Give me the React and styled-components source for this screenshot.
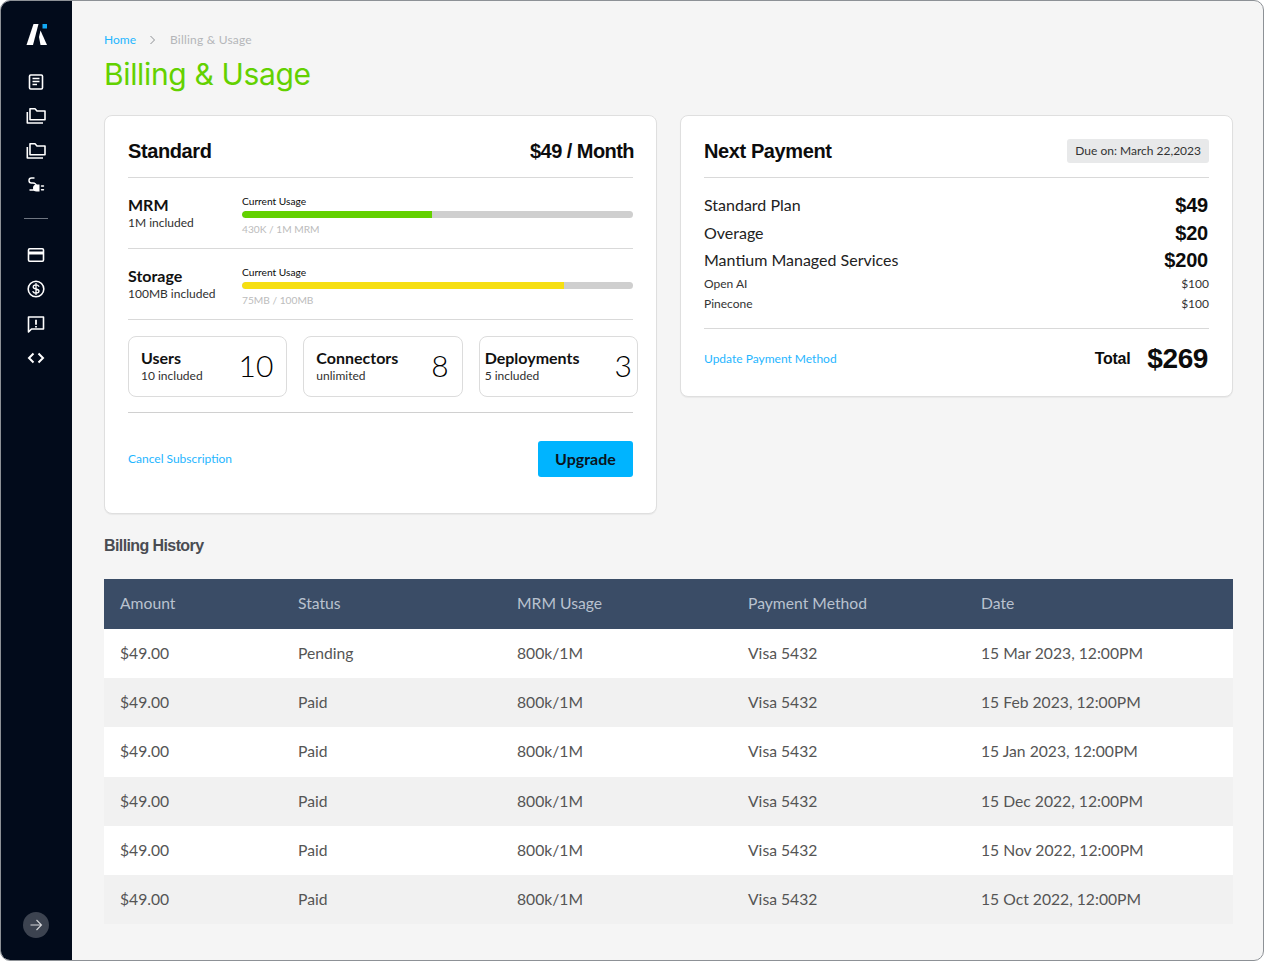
import React from 'react';
import styled, { createGlobalStyle } from 'styled-components';

const bodyFont = `Lato, 'Noto Sans', sans-serif`;
const headFont = `'Liberation Sans', Arial, sans-serif`;

const GlobalStyle = createGlobalStyle`
  html, body {
    margin: 0;
    padding: 0;
    background: #fff;
  }
  * {
    box-sizing: border-box;
  }
`;

const Frame = styled.div`
  display: flex;
  width: 1264px;
  height: 961px;
  overflow: hidden;
  border: 1px solid #8d9196;
  border-radius: 10px;
  background: #f5f5f5;
  font-family: ${bodyFont};
  color: #0c0c0c;
`;

const Sidebar = styled.nav`
  flex: 0 0 71px;
  display: flex;
  flex-direction: column;
  align-items: center;
  padding: 22px 1px 22px 0;
  background: #020b1b;
  color: #fff;
`;

const Logo = styled.svg`
  display: block;
  width: 23px;
  height: 24px;
  margin-bottom: 23px;
`;

const NavIcon = styled.a`
  display: flex;
  align-items: center;
  justify-content: center;
  width: 24px;
  height: 24px;
  margin-bottom: 10.3px;
  color: #fff;

  svg {
    display: block;
    width: 20px;
    height: 20px;
  }
`;

const NavRule = styled.hr`
  width: 24px;
  height: 1px;
  margin: 11px 0 24px;
  border: 0;
  background: #6f7681;
`;

const CollapseButton = styled.button`
  display: flex;
  align-items: center;
  justify-content: center;
  width: 26px;
  height: 26px;
  margin-top: auto;
  padding: 0;
  border: 0;
  border-radius: 50%;
  background: #3c4350;
  color: #d5d7da;

  svg {
    width: 14px;
    height: 14px;
  }
`;

const Main = styled.main`
  flex: 1;
  min-width: 0;
  padding: 31px 30px 0 32px;
`;

const Breadcrumb = styled.div`
  display: flex;
  align-items: center;
  height: 15px;
  font-size: 12px;
  color: #b4b6b9;

  a {
    color: #1fb6ff;
  }

  span {
    letter-spacing: 0.2px;
  }

  svg {
    width: 10px;
    height: 10px;
    margin: 0 12px 0 12px;
    color: #8c8f93;
  }
`;

const PageTitle = styled.h1`
  margin: 7px 0 21px;
  font-family: Inter, sans-serif;
  font-size: 30px;
  line-height: 40px;
  font-weight: 400;
  letter-spacing: -0.35px;
  color: #63d100;
`;

const CardRow = styled.div`
  display: grid;
  grid-template-columns: 553px 553px;
  column-gap: 23px;
  align-items: start;
`;

const Card = styled.section`
  height: ${p => p.$height}px;
  padding: 0 23px;
  background: #fff;
  border: 1px solid #dfdfdf;
  border-radius: 8px;
  box-shadow: 0 1px 1px rgba(0, 0, 0, 0.05);
`;

const CardHead = styled.header`
  display: flex;
  align-items: center;
  justify-content: space-between;
  height: 62px;
  padding-top: 8px;
  border-bottom: 1px solid #d9d9d9;
`;

const CardTitle = styled.h2`
  margin: 0;
  font-family: ${headFont};
  font-size: 20px;
  line-height: 24px;
  font-weight: 700;
  letter-spacing: -0.4px;
`;

const PlanPrice = styled(CardTitle)`
  letter-spacing: -0.55px;
  margin-right: -1px;
`;

const DueBadge = styled.span`
  padding: 0 8px;
  height: 24px;
  line-height: 24px;
  font-size: 12px;
  color: #333;
  background: #e8e9ea;
  border-radius: 3px;
`;

const MeterRow = styled.div`
  display: flex;
  height: 71px;
  padding-top: 18px;
  border-bottom: 1px solid #d9d9d9;
`;

const MeterName = styled.div`
  flex: 0 0 114px;
`;

const ItemTitle = styled.div`
  font-size: 16px;
  line-height: 17px;
  font-weight: 700;
  color: #111;
`;

const ItemNote = styled.div`
  font-size: 12px;
  line-height: 19px;
  color: #2f2f2f;
`;

const MeterBody = styled.div`
  flex: 1;
  margin-top: -2px;
  font-size: 10.2px;
  line-height: 14px;
`;

const Track = styled.div`
  height: 7px;
  margin: 3px 0 4px;
  overflow: hidden;
  border-radius: 4px;
  background: #cfcfcf;
`;

const Fill = styled.div`
  height: 100%;
  border-radius: 4px 0 0 4px;
  background: ${p => p.$color};
`;

const MeterCaption = styled.div`
  color: #bcbcbc;
`;

const StatRow = styled.div`
  display: grid;
  grid-template-columns: repeat(3, 1fr);
  gap: 16px;
  width: 510px;
  height: 92px;
  padding: 16px 0 15px;
`;

const StatDivider = styled.div`
  border-top: 1px solid #d0d0d0;
`;

const StatBox = styled.div`
  display: flex;
  align-items: center;
  justify-content: space-between;
  padding: 0 ${p => p.$right}px 0 ${p => p.$left}px;
  border: 1px solid #dcdcdc;
  border-radius: 8px;
`;

const StatNumber = styled.span`
  margin-bottom: 4px;
  font-size: 30px;
  font-weight: 300;
  color: #000;
`;

const ActionRow = styled.div`
  display: flex;
  align-items: center;
  justify-content: space-between;
  margin-top: 28px;
`;

const TextLink = styled.a`
  margin-top: -2px;
  font-size: 12px;
  color: #1fb6ff;
`;

const UpgradeButton = styled.button`
  width: 95px;
  height: 36px;
  padding: 0 0 2px;
  border: 0;
  border-radius: 3px;
  background: #00b4ff;
  font-family: ${bodyFont};
  font-size: 16px;
  font-weight: 700;
  color: #0a1420;
`;

const Charges = styled.div`
  padding: 13px 0 14px;
  border-bottom: 1px solid #d9d9d9;
`;

const ChargeLine = styled.div`
  display: flex;
  align-items: center;
  justify-content: space-between;
  height: 27.5px;
  font-size: 16px;
  color: #222;

  strong {
    margin: 2px 1px 0 0;
    font-family: ${headFont};
    font-size: 20px;
    letter-spacing: -0.2px;
    color: #0c0c0c;
  }
`;

const SubLine = styled.div`
  display: flex;
  justify-content: space-between;
  height: 20px;
  line-height: 20px;
  font-size: 12px;
  color: #333;
`;

const TotalRow = styled.div`
  display: flex;
  align-items: center;
  justify-content: space-between;
  height: 61px;
`;

const TotalGroup = styled.div`
  display: flex;
  align-items: center;
  gap: 17px;
  margin-right: 1px;
  font-family: ${headFont};
  font-weight: 700;
  font-size: 16px;
  letter-spacing: -0.3px;

  b {
    font-size: 28px;
    letter-spacing: -0.4px;
  }
`;

const SectionTitle = styled.h3`
  margin: 22px 0 23px;
  font-family: ${headFont};
  font-size: 16px;
  line-height: 20px;
  font-weight: 700;
  letter-spacing: -0.6px;
  color: #4a4c52;
`;

const HistoryTable = styled.table`
  width: 1129px;
  border-collapse: collapse;
  table-layout: fixed;
  font-size: 15.7px;

  th,
  td {
    padding: 0 0 0 16px;
    text-align: left;
    font-weight: 400;
  }

  th {
    height: 50px;
    padding-bottom: 2px;
    background: #3a4c66;
    color: #b9c2cf;
  }

  td {
    height: 49.2px;
    padding-bottom: 1px;
    color: #555;
  }

  tbody tr:nth-child(odd) {
    background: #fff;
  }

  tbody tr:nth-child(even) {
    background: #f1f1f1;
  }
`;

const stroke = { fill: 'none', stroke: 'currentColor', strokeWidth: 1.6 };

const IconNews = () => (
  <svg viewBox="0 0 20 20" {...stroke}>
    <rect x="3.500" y="3" width="13" height="14" rx="1.200" />
    <path d="M6.500 6.500h7M6.500 9.500h7M6.500 12.500h4.500" />
  </svg>
);

const IconFolders = () => (
  <svg viewBox="0 0 20 20" {...stroke} strokeLinejoin="round">
    <path d="M4 2.800v11h15V5h-8L9 2.800z" />
    <path d="M1.300 6v11H17" />
  </svg>
);

const IconPlug = () => (
  <svg viewBox="0 0 20 20" {...stroke} strokeWidth="1.400" strokeLinecap="round">
    <path d="M8 3H5.500a2.500 2.500 0 0 0 0 5H7a3 3 0 0 1 0 7H4" />
    <path d="M10.500 9.500h3v7h-3a3.500 3.500 0 0 1 0-7z" fill="currentColor" stroke="none" />
    <path d="M15.500 11h2M15.500 14.800h2" />
  </svg>
);

const IconCard = () => (
  <svg viewBox="0 0 20 20" {...stroke}>
    <rect x="2.500" y="3.800" width="15" height="12.400" rx="1.200" />
    <path d="M2.500 8h15" strokeWidth="3" />
  </svg>
);

const IconDollar = () => (
  <svg viewBox="0 0 20 20" {...stroke} strokeLinecap="round">
    <circle cx="10" cy="10" r="7.800" />
    <path d="M12.800 7.300c-.5-1-1.500-1.500-2.800-1.500-1.600 0-2.800.9-2.800 2.100 0 2.900 5.800 1.300 5.800 4.200 0 1.200-1.300 2.100-3 2.100-1.400 0-2.500-.6-3-1.600M10 4.500v11" strokeWidth="1.300" />
  </svg>
);

const IconReport = () => (
  <svg viewBox="0 0 20 20" {...stroke} strokeLinejoin="round">
    <path d="M2.500 18V3h15v12H5.500z" />
    <path d="M10 5.800v5M10 12v1.400" strokeWidth="1.800" />
  </svg>
);

const IconCode = () => (
  <svg viewBox="0 0 20 20" {...stroke} strokeWidth="2">
    <path d="M7.500 5.500 3 10l4.500 4.500M12.500 5.500 17 10l-4.500 4.500" />
  </svg>
);

const IconArrow = () => (
  <svg viewBox="0 0 14 14" fill="none" stroke="currentColor" strokeWidth="1.100">
    <path d="M1.500 7h11M7.500 2l5 5-5 5" />
  </svg>
);

const IconChevron = () => (
  <svg viewBox="0 0 10 10" fill="none" stroke="currentColor" strokeWidth="1">
    <path d="M2.500 1 6.500 5l-4 4" />
  </svg>
);

const navTop = [IconNews, IconFolders, IconFolders, IconPlug];
const navBottom = [IconCard, IconDollar, IconReport, IconCode];

const meters = [
  { name: 'MRM', note: '1M included', caption: '430K / 1M MRM', pct: 48.6, color: '#63d100' },
  { name: 'Storage', note: '100MB included', caption: '75MB / 100MB', pct: 82.4, color: '#f6df12' },
];

const stats = [
  { name: 'Users', note: '10 included', value: '10', left: 12, right: 13 },
  { name: 'Connectors', note: 'unlimited', value: '8', left: 12, right: 13 },
  { name: 'Deployments', note: '5 included', value: '3', left: 5, right: 5 },
];

const history = [
  ['Pending', '15 Mar 2023, 12:00PM'],
  ['Paid', '15 Feb 2023, 12:00PM'],
  ['Paid', '15 Jan 2023, 12:00PM'],
  ['Paid', '15 Dec 2022, 12:00PM'],
  ['Paid', '15 Nov 2022, 12:00PM'],
  ['Paid', '15 Oct 2022, 12:00PM'],
];

const columns = [
  ['Amount', 178],
  ['Status', 219],
  ['MRM Usage', 231],
  ['Payment Method', 233],
  ['Date', 268],
];

export default function App() {
  return (
    <Frame>
      <GlobalStyle />
      <Sidebar>
        <Logo viewBox="0 0 23 24">
          <path d="M1.500 22 8.500 1h5L8 22z" fill="#fff" />
          <path d="M15.500 7.500 22 22h-6.500l-1.500-8z" fill="#fff" />
          <rect x="17.500" y="1" width="4.500" height="4.500" fill="#12a9f5" />
        </Logo>
        {navTop.map((Icon, i) => (
          <NavIcon key={i}>
            <Icon />
          </NavIcon>
        ))}
        <NavRule />
        {navBottom.map((Icon, i) => (
          <NavIcon key={i}>
            <Icon />
          </NavIcon>
        ))}
        <CollapseButton>
          <IconArrow />
        </CollapseButton>
      </Sidebar>
      <Main>
        <Breadcrumb>
          <a>Home</a>
          <IconChevron />
          <span>Billing &amp; Usage</span>
        </Breadcrumb>
        <PageTitle>Billing &amp; Usage</PageTitle>
        <CardRow>
          <Card $height={399}>
            <CardHead>
              <CardTitle>Standard</CardTitle>
              <PlanPrice>$49 / Month</PlanPrice>
            </CardHead>
            {meters.map(m => (
              <MeterRow key={m.name}>
                <MeterName>
                  <ItemTitle>{m.name}</ItemTitle>
                  <ItemNote>{m.note}</ItemNote>
                </MeterName>
                <MeterBody>
                  Current Usage
                  <Track>
                    <Fill $color={m.color} style={{ width: `${m.pct}%` }} />
                  </Track>
                  <MeterCaption>{m.caption}</MeterCaption>
                </MeterBody>
              </MeterRow>
            ))}
            <StatRow>
              {stats.map(s => (
                <StatBox key={s.name} $left={s.left} $right={s.right}>
                  <div>
                    <ItemTitle>{s.name}</ItemTitle>
                    <ItemNote>{s.note}</ItemNote>
                  </div>
                  <StatNumber>{s.value}</StatNumber>
                </StatBox>
              ))}
            </StatRow>
            <StatDivider />
            <ActionRow>
              <TextLink>Cancel Subscription</TextLink>
              <UpgradeButton>Upgrade</UpgradeButton>
            </ActionRow>
          </Card>
          <Card $height={282}>
            <CardHead>
              <CardTitle>Next Payment</CardTitle>
              <DueBadge>Due on: March 22,2023</DueBadge>
            </CardHead>
            <Charges>
              <ChargeLine>
                Standard Plan <strong>$49</strong>
              </ChargeLine>
              <ChargeLine>
                Overage <strong>$20</strong>
              </ChargeLine>
              <ChargeLine>
                Mantium Managed Services <strong>$200</strong>
              </ChargeLine>
              <SubLine>
                <span>Open AI</span>
                <span>$100</span>
              </SubLine>
              <SubLine>
                <span>Pinecone</span>
                <span>$100</span>
              </SubLine>
            </Charges>
            <TotalRow>
              <TextLink>Update Payment Method</TextLink>
              <TotalGroup>
                Total <b>$269</b>
              </TotalGroup>
            </TotalRow>
          </Card>
        </CardRow>
        <SectionTitle>Billing History</SectionTitle>
        <HistoryTable>
          <colgroup>
            {columns.map(([name, width]) => (
              <col key={name} width={width} />
            ))}
          </colgroup>
          <thead>
            <tr>
              {columns.map(([name]) => (
                <th key={name}>{name}</th>
              ))}
            </tr>
          </thead>
          <tbody>
            {history.map(([status, date]) => (
              <tr key={date}>
                <td>$49.00</td>
                <td>{status}</td>
                <td>800k/1M</td>
                <td>Visa 5432</td>
                <td>{date}</td>
              </tr>
            ))}
          </tbody>
        </HistoryTable>
      </Main>
    </Frame>
  );
}
